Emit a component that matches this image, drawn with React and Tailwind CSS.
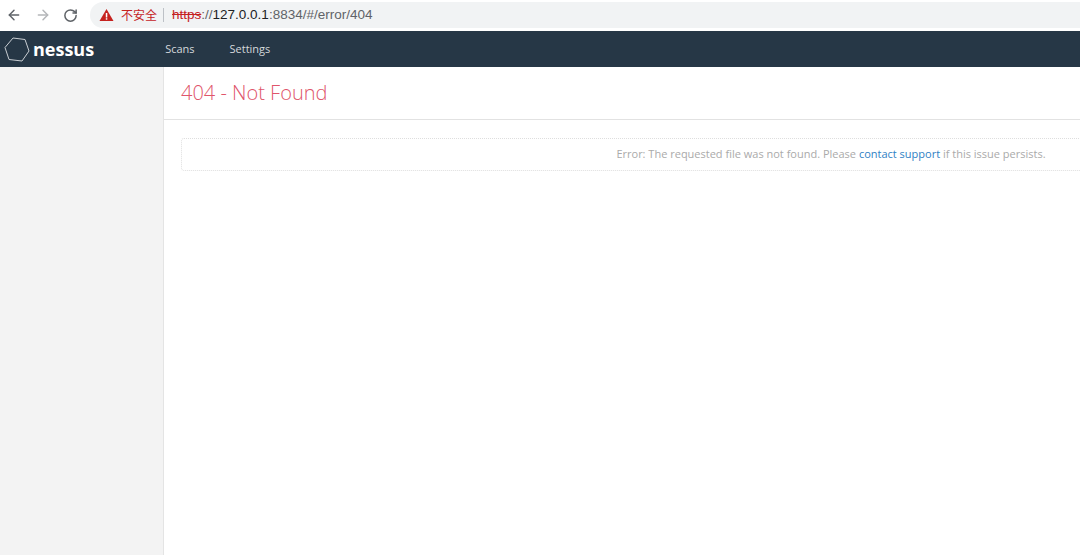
import React from "react";
import { ArrowLeft, ArrowRight, RotateCw } from "lucide-react";

const font = { sans: "font-['Open_Sans','Noto_Sans_CJK_SC',sans-serif]" };

const BrowserBar = () => (
  <div className="flex h-[30px] items-center bg-white">
    <ArrowLeft className="ml-[6px] text-[#5f6368]" size={16} strokeWidth={2.2} />
    <ArrowRight className="ml-[13px] text-[#b4b6b9]" size={16} strokeWidth={2.2} />
    <RotateCw className="ml-[12px] text-[#5f6368]" size={15} strokeWidth={2.4} />
    <div className="ml-[12px] flex h-[26px] flex-1 items-center rounded-l-[13px] bg-[#f1f3f4] pl-[9px]">
      <svg width="15" height="14" viewBox="0 0 15 14">
        <path d="M7.5 1 L14.5 13 H0.5 Z" fill="#c5221f" />
        <rect x="6.8" y="5" width="1.5" height="4.5" fill="#fff" />
        <rect x="6.8" y="10.2" width="1.5" height="1.5" fill="#fff" />
      </svg>
      <span className="ml-[7px] font-['Noto_Sans_CJK_SC',sans-serif] text-[12px] text-[#c5221f]">不安全</span>
      <div className="ml-[6px] h-[14px] w-px bg-[#bdc1c6]" />
      <div className="ml-[8px] font-['Liberation_Sans',sans-serif] text-[13.5px] text-[#5f6368]">
        <span className="text-[#c5221f] line-through">https</span>
        <span>://</span>
        <span className="text-[#202124]">127.0.0.1</span>
        <span>:8834/#/error/404</span>
      </div>
    </div>
  </div>
);

const NavBar = () => (
  <div className="mt-px flex h-[36px] items-center bg-[#263746]">
    <svg className="ml-[4px]" width="26" height="27" viewBox="0 0 26 27" fill="none">
      <path d="M9 2 L21 3.5 L25 15 L18 25 L5 23.5 L1 11.5 Z" stroke="#c9ced3" strokeWidth="1" />
    </svg>
    <span className="ml-[3px] font-['Open_Sans',sans-serif] text-[18px] leading-none font-bold text-white">nessus</span>
    <span className="ml-[71px] font-['Open_Sans',sans-serif] text-[11px] text-[#d5d9dc]">Scans</span>
    <span className="ml-[35px] font-['Open_Sans',sans-serif] text-[11px] text-[#d5d9dc]">Settings</span>
  </div>
);

export default function App() {
  return (
    <div className={`flex h-[555px] w-[1080px] flex-col overflow-hidden bg-white ${font.sans}`}>
      <BrowserBar />
      <NavBar />
      <div className="flex flex-1">
        <div className="w-[164px] shrink-0 border-r border-[#e4e4e4] bg-[#f3f3f3]" />
        <div className="min-w-0 flex-1">
          <div className="flex h-[53px] items-center border-b border-[#e2e2e2] pl-[17px]">
            <h1 className="font-['Open_Sans',sans-serif] text-[20px] font-light text-[#e0556b]">404 - Not Found</h1>
          </div>
          <div className="pt-[18px] pl-[17px]">
            <div className="flex h-[33px] w-[1300px] items-center justify-center rounded-[3px] border border-dotted border-[#dedede] text-[11px] text-[#aaaaaa]">
              <span>
                Error: The requested file was not found. Please <span className="text-[#2f7fc4]">contact support</span> if this issue persists.
              </span>
            </div>
          </div>
        </div>
      </div>
    </div>
  );
}
